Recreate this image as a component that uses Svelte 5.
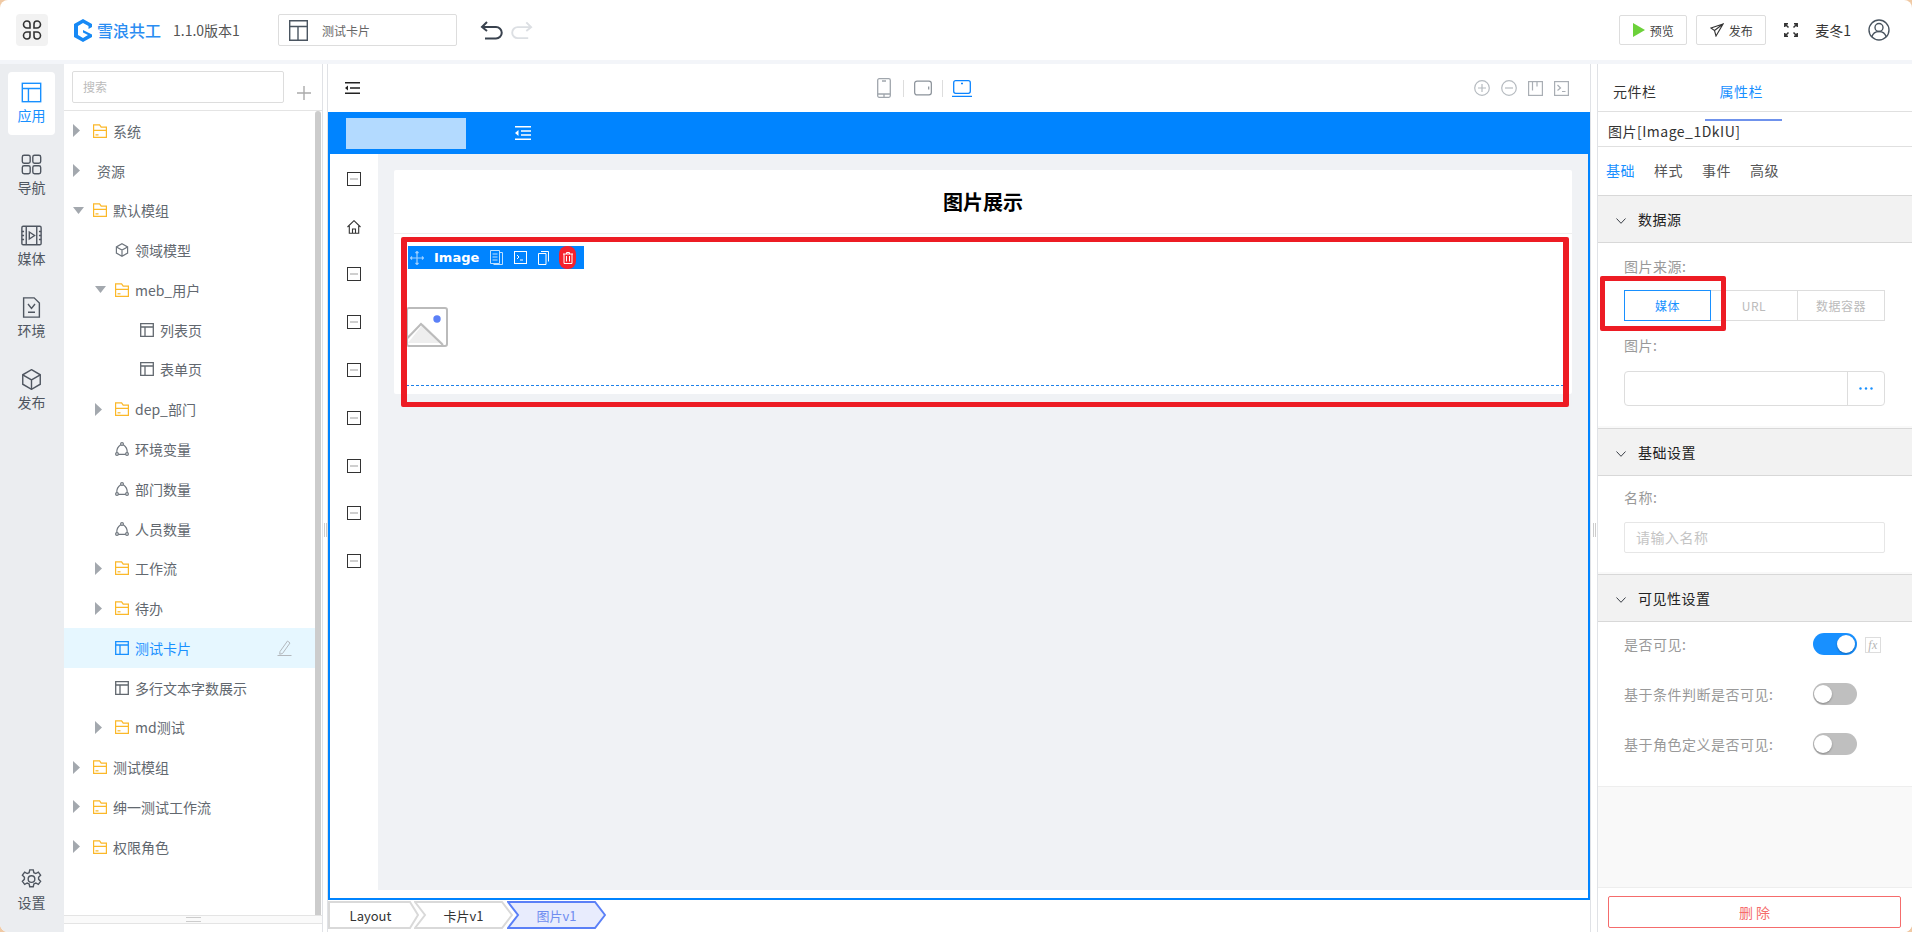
<script>
  const railItems = [
    { label: "应用", icon: "app", active: true },
    { label: "导航", icon: "nav" },
    { label: "媒体", icon: "media" },
    { label: "环境", icon: "env" },
    { label: "发布", icon: "cube" }
  ];

  const tree = [
    { level: 1, arrow: "right", icon: "folder", label: "系统" },
    { level: 1, arrow: "right", label: "资源" },
    { level: 1, arrow: "down", icon: "folder", label: "默认模组" },
    { level: 2, icon: "box", label: "领域模型" },
    { level: 2, arrow: "down", icon: "folder", label: "meb_用户" },
    { level: 3, icon: "page", label: "列表页" },
    { level: 3, icon: "page", label: "表单页" },
    { level: 2, arrow: "right", icon: "folder", label: "dep_部门" },
    { level: 2, icon: "bell", label: "环境变量" },
    { level: 2, icon: "bell", label: "部门数量" },
    { level: 2, icon: "bell", label: "人员数量" },
    { level: 2, arrow: "right", icon: "folder", label: "工作流" },
    { level: 2, arrow: "right", icon: "folder", label: "待办" },
    { level: 2, icon: "page", label: "测试卡片", active: true },
    { level: 2, icon: "page", label: "多行文本字数展示" },
    { level: 2, arrow: "right", icon: "folder", label: "md测试" },
    { level: 1, arrow: "right", icon: "folder", label: "测试模组" },
    { level: 1, arrow: "right", icon: "folder", label: "绅一测试工作流" },
    { level: 1, arrow: "right", icon: "folder", label: "权限角色" }
  ];

  const sideIcons = ["box", "home", "box", "box", "box", "box", "box", "box", "box"];
  const tabs = ["基础", "样式", "事件", "高级"];
  const crumbs = [
    { label: "Layout", first: true },
    { label: "卡片v1" },
    { label: "图片v1", active: true }
  ];
  const switches = [
    { label: "是否可见:", on: true },
    { label: "基于条件判断是否可见:", on: false },
    { label: "基于角色定义是否可见:", on: false }
  ];
</script>

{#snippet railIcon(name)}
  <svg width="21" height="21" viewBox="0 0 24 24" fill="none" stroke="currentColor" stroke-width="1.6">
    {#if name === "app"}
      <rect x="1.500" y="1.500" width="21" height="21" />
      <path d="M1.500 7.500h21M8.500 7.500v15" />
    {:else if name === "nav"}
      <rect x="1.500" y="1.500" width="9" height="9" rx="2" />
      <rect x="13.500" y="1.500" width="9" height="9" rx="2" />
      <rect x="1.500" y="13.500" width="9" height="9" rx="2" />
      <rect x="13.500" y="13.500" width="9" height="9" rx="2" />
    {:else if name === "media"}
      <rect x="1" y="1.500" width="22" height="21" rx="1.500" />
      <path d="M6 1.500v21M18 1.500v21M1 7.500h2.500M1 12h2.500M1 16.500h2.500M20.500 7.500H23M20.500 12H23M20.500 16.500H23" />
      <path d="M9.500 8l6 4-6 4z" />
    {:else if name === "env"}
      <path d="M3 1h12l6 6v16H3z" />
      <path d="M8 8l4 5 4-5M8 17.500h8" />
    {:else if name === "cube"}
      <path d="M12 .8l10 5.800v10.800l-10 5.800-10-5.800V6.600z" />
      <path d="M2 6.600l10 5.800 10-5.800M12 12.400v10.800" />
    {:else if name === "gear"}
      <path d="M10 1h4l.7 3.200 2.200 1 2.900-1.600 2.600 3.400-2.300 2.400v2.400l2.300 2.400-2.600 3.400-2.900-1.600-2.200 1-.7 3.200h-4l-.7-3.200-2.200-1-2.900 1.600-2.600-3.400 2.300-2.400v-2.400L1.600 7l2.600-3.400 2.900 1.600 2.200-1z" />
      <circle cx="12" cy="11.500" r="3.800" />
    {/if}
  </svg>
{/snippet}

{#snippet treeIcon(name)}
  <svg class="tree-icon" width="14" height="14" viewBox="0 0 14 14" fill="none" stroke-width="1.200">
    {#if name === "folder"}
      <path d="M.6 13.400V.8h6l1.600 2.400h5.200v10.200zM.6 6.400h12.800" stroke="#fbb829" />
      <path d="M2.500 10.800h3" stroke="#fbb829" />
    {:else if name === "box"}
      <path d="M7 .8l5.600 3.100v6.200L7 13.200l-5.600-3.100V3.900zM1.400 3.900L7 7l5.600-3.100M7 7v6.200" stroke="#6f767e" />
    {:else if name === "page"}
      <path d="M.7.7h12.600v12.600H.7zM.7 4h12.600M5 4v9.300" stroke="currentColor" stroke-width="1.300" />
    {:else if name === "bell"}
      <circle cx="7" cy="2" r="1.400" stroke="#6f767e" />
      <circle cx="2" cy="12" r="1.400" stroke="#6f767e" />
      <circle cx="12" cy="12" r="1.400" stroke="#6f767e" />
      <path d="M5.700 2.700C3 4.500 1.600 7.500 1.800 10.600M8.300 2.700c2.700 1.800 4.100 4.800 3.900 7.900M3.400 12.300h7.200" stroke="#6f767e" />
    {/if}
  </svg>
{/snippet}

{#snippet chevron()}
  <svg class="chev" width="10" height="6" viewBox="0 0 10 6" fill="none" stroke="#3a3f47" stroke-width="1"><path d="M.5.5L5 5.300 9.500.5" /></svg>
{/snippet}

<div class="page">
  <header class="top">
    <div class="menu-btn">
      <svg width="20" height="22" viewBox="0 0 20 22" fill="none" stroke="#333" stroke-width="1.600">
        <path d="M5 2a3 3 0 0 1 3 3v4H5a3.200 3.200 0 0 1 0-7zM15 2a3 3 0 0 0-3 3v4h3a3.200 3.200 0 0 0 0-7zM5 20a3 3 0 0 0 3-3v-4H5a3.200 3.200 0 0 0 0 7zM15 20a3 3 0 0 1-3-3v-4h3a3.200 3.200 0 0 1 0 7z" />
      </svg>
    </div>
    <svg class="logo" width="18" height="23" viewBox="0 0 18 23">
      <path d="M9 0l9 5v3l-3.500 2V7L9 4 4 7v9l5 3 5-3-5-2.500V11l9 4.500V18l-9 5-9-5V5z" fill="#1789f5" />
    </svg>
    <span class="brand">雪浪共工</span>
    <span class="version">1.1.0版本1</span>
    <div class="doc-select">
      <svg width="19" height="21" viewBox="0 0 19 21" fill="none" stroke="#4a5560" stroke-width="1.400"><path d="M.7.7h17.600v19.600H.7zM.7 6.500h17.600M9 6.500v13.800" /></svg>
      <span>测试卡片</span>
    </div>
    <svg class="undo" width="23" height="19" viewBox="0 0 23 19" fill="none" stroke="#39424e" stroke-width="2"><path d="M7 1L2 6l5 4M2 6h14a5.500 5.500 0 0 1 0 11.500H5" /></svg>
    <svg class="redo" width="22" height="19" viewBox="0 0 23 19" fill="none" stroke="#dcdfe3" stroke-width="2"><path d="M16 1l5 5-5 4M21 6H7a5.500 5.500 0 0 0 0 11.500h11" /></svg>
    <div class="top-right">
      <button class="top-btn">
        <svg width="12" height="14" viewBox="0 0 12 14"><path d="M0 0l12 7-12 7z" fill="#6cd13a" /></svg>预览
      </button>
      <button class="top-btn publish">
        <svg width="14" height="14" viewBox="0 0 14 14" fill="none" stroke="#333" stroke-width="1.100"><path d="M13 1L1 5l3.500 2.500L6 13zM4.500 7.500L13 1" /></svg>发布
      </button>
      <svg class="full" width="14" height="14" viewBox="0 0 14 14" fill="none" stroke="#333" stroke-width="1.500"><path d="M.8 4V.8H4M1 1l3.500 3.500M13.200 4V.8H10M13 1L9.500 4.500M.8 10v3.200H4M1 13l3.500-3.500M13.200 10v3.200H10M13 13L9.500 9.500" /></svg>
      <span class="user">麦冬1</span>
      <svg width="22" height="22" viewBox="0 0 22 22" fill="none" stroke="#4a5560" stroke-width="1.400"><circle cx="11" cy="11" r="10" /><circle cx="11" cy="8.500" r="4" /><path d="M3.800 18c1-3.500 4-5.500 7.200-5.500s6.200 2 7.200 5.500" /></svg>
    </div>
  </header>

  <div class="body">
    <nav class="rail">
      <div class="rail-top">
        {#each railItems as item}
          <div class="rail-item" class:active={item.active}>
            {@render railIcon(item.icon)}
            <span>{item.label}</span>
          </div>
        {/each}
      </div>
      <div class="rail-item">
        {@render railIcon("gear")}
        <span>设置</span>
      </div>
    </nav>

    <aside class="tree-panel">
      <div class="search-row">
        <div class="search">搜索</div>
        <svg width="14" height="14" viewBox="0 0 14 14" stroke="#aaa" stroke-width="1.400"><path d="M7 0v14M0 7h14" /></svg>
      </div>
      <div class="tree-scroll">
        <div class="tree">
          {#each tree as row}
            <div class="row level-{row.level}" class:active={row.active}>
              <span class="arrow">
                {#if row.arrow === "right"}
                  <svg width="7" height="13" viewBox="0 0 7 13"><path d="M0 0l7 6.500L0 13z" fill="#a3a8ae" /></svg>
                {:else if row.arrow === "down"}
                  <svg width="11" height="7" viewBox="0 0 11 7"><path d="M0 0h11L5.500 7z" fill="#a3a8ae" /></svg>
                {/if}
              </span>
              {#if row.icon}
                {@render treeIcon(row.icon)}
              {:else}
                <span class="no-icon"></span>
              {/if}
              <span class="row-label">{row.label}</span>
              {#if row.active}
                <svg class="pen" width="15" height="16" viewBox="0 0 15 16" fill="none" stroke="#b3b8bd" stroke-width="1"><path d="M3 11.500L10.500 1l2.500 2-7.500 10.500-2.800.7zM.5 15.500h14" /></svg>
              {/if}
            </div>
          {/each}
        </div>
        <div class="scrollbar"></div>
      </div>
      <div class="tree-foot"><i></i></div>
      <div class="tree-foot-input"></div>
    </aside>

    <div class="splitter"><i></i></div>

    <main class="center">
      <div class="toolbar">
        <svg class="indent" width="15" height="12" viewBox="0 0 15 12" stroke="#222" stroke-width="1.400" fill="none"><path d="M0 .7h15M5 6h10M0 11.300h15" /><path d="M3 3.500L0 6l3 2.500z" fill="#222" stroke="none" /></svg>
        <div class="devices">
          <svg width="14" height="20" viewBox="0 0 14 20" fill="none" stroke="#a0a6ad" stroke-width="1.300"><rect x=".7" y=".7" width="12.600" height="18.600" rx="1.500" /><path d="M.7 16h12.600M7 16v3.300M5 3h4" /></svg>
          <i class="first"></i>
          <svg width="18" height="16" viewBox="0 0 19 16" fill="none" stroke="#8b929a" stroke-width="1.300"><rect x=".7" y=".7" width="17.600" height="14.600" rx="2.500" /><path d="M15.500 6.500v3" /></svg>
          <i></i>
          <svg class="laptop" width="20" height="17" viewBox="0 0 20 17" fill="none" stroke="#0a84ff" stroke-width="1.300"><rect x="1.700" y=".7" width="16.600" height="12.600" rx="2" /><path d="M0 16.300h20M9 3.500h2" /></svg>
        </div>
        <div class="tools">
          <svg width="16" height="16" viewBox="0 0 16 16" fill="none" stroke="#b6bbc0" stroke-width="1.200"><circle cx="8" cy="8" r="7.300" /><path d="M8 4v8M4 8h8" /></svg>
          <svg width="16" height="16" viewBox="0 0 16 16" fill="none" stroke="#b6bbc0" stroke-width="1.200"><circle cx="8" cy="8" r="7.300" /><path d="M4 8h8" /></svg>
          <svg width="15" height="15" viewBox="0 0 15 15" fill="none" stroke="#a9aeb4" stroke-width="1.200"><rect x=".6" y=".6" width="13.800" height="13.800" /><path d="M4.500.6v9M9 .6v5" /></svg>
          <svg width="15" height="15" viewBox="0 0 15 15" fill="none" stroke="#a9aeb4" stroke-width="1.200"><rect x=".6" y=".6" width="13.800" height="13.800" /><path d="M3.500 4l3 3-3 2.500M8 10.500h3.500" /></svg>
        </div>
      </div>

      <div class="frame">
        <div class="frame-bar">
          <div class="frame-logo"></div>
          <svg width="16" height="14" viewBox="0 0 16 14" stroke="#fff" stroke-width="1.400" fill="none"><path d="M0 .7h16M6 5h10M6 9h10M0 13.300h16" /><path d="M3.500 4L0 7l3.500 3z" fill="#fff" stroke="none" /></svg>
        </div>
        <div class="frame-body">
          <div class="side">
            {#each sideIcons as icon}
              <div class="side-item">
                {#if icon === "home"}
                  <svg width="14" height="14" viewBox="0 0 14 14" fill="none" stroke="#333" stroke-width="1.100"><path d="M.5 7L7 .7 13.500 7M2.300 6v7.300h9.400V6M5.500 13.300V9h3v4.300" /></svg>
                {:else}
                  <svg width="14" height="14" viewBox="0 0 14 14" fill="none"><rect x=".5" y=".5" width="13" height="13" stroke="#333" /><path d="M3 7h8" stroke="#bbb" stroke-width="1.400" /></svg>
                {/if}
              </div>
            {/each}
          </div>
          <div class="canvas">
            <div class="card">
              <div class="card-title">图片展示</div>
              <div class="card-body">
                <div class="image-comp">
                  <svg class="placeholder" width="42" height="40" viewBox="0 0 42 40">
                    <path d="M2 36L17 17l20 19z" fill="#eee" />
                    <rect x="1" y="1" width="40" height="38" rx="2" fill="none" stroke="#bbb" stroke-width="2" />
                    <path d="M1.500 31L15 17l22 21" fill="none" stroke="#bbb" stroke-width="2" />
                    <circle cx="31" cy="12" r="3.700" fill="#5b80f7" />
                  </svg>
                  <div class="comp-bar">
                    <svg width="14" height="14" viewBox="0 0 14 14" fill="none" stroke="#9fd0ff" stroke-width="1.200"><path d="M7 0v14M0 7h14M5.500 2L7 .5 8.500 2M5.500 12L7 13.500 8.500 12M2 5.500L.5 7 2 8.500M12 5.500L13.500 7 12 8.500" /></svg>
                    <b>Image</b>
                    <svg class="bar-i" width="13" height="15" viewBox="0 0 13 15" fill="none" stroke="#bfe0ff" stroke-width="1"><path d="M.5.500h9v13h-9zM9.500 2.500h3v12h-9M2.500 4h5M2.500 7h5M2.500 10h5" /></svg>
                    <svg class="bar-i" width="13" height="13" viewBox="0 0 13 13" fill="none" stroke="#fff" stroke-width="1"><rect x=".5" y=".5" width="12" height="12" /><path d="M3 4l2 2-2 2M6 9h3" /></svg>
                    <svg class="bar-i" width="11" height="14" viewBox="0 0 11 14" fill="none" stroke="#fff" stroke-width="1"><path d="M.5 2.500h7.500v11H.5zM3 .5h7.500v10" /></svg>
                    <span class="trash">
                      <svg width="10" height="12" viewBox="0 0 10 12" fill="none" stroke="#fff" stroke-width="1"><path d="M0 2h10M3.500 2V.5h3V2M1 2v9.500h8V2M3.500 4v5.500M6.500 4v5.500" /></svg>
                    </span>
                  </div>
                  <div class="mark mark-image"></div>
                </div>
              </div>
            </div>
          </div>
        </div>
      </div>

      <div class="crumbs">
        {#each crumbs as crumb}
          <div class="crumb" class:first={crumb.first} class:active={crumb.active}>
            {#if crumb.first}
              <svg width="91" height="28" viewBox="0 0 91 28"><path d="M1 1h81l8 13-8 13H1z" /></svg>
            {:else}
              <svg width="99" height="28" viewBox="0 0 99 28"><path d="M1 1h87l10 13-10 13H1l10-13z" /></svg>
            {/if}
            <span>{crumb.label}</span>
          </div>
        {/each}
      </div>
    </main>

    <div class="splitter right"><i></i></div>

    <aside class="props">
      <div class="prop-tabs">
        <span>元件栏</span>
        <span class="current">属性栏</span>
      </div>
      <div class="comp-name">图片[Image_1DkIU]</div>
      <div class="sub-tabs">
        {#each tabs as tab, i}
          <span class:on={i === 0}>{tab}</span>
        {/each}
      </div>

      <section class="sec-head">{@render chevron()}数据源</section>
      <div class="sec-body source">
        <label>图片来源:</label>
        <div class="segments">
          <span class="seg selected">媒体</span>
          <span class="seg">URL</span>
          <span class="seg">数据容器</span>
        </div>
        <label class="second">图片:</label>
        <div class="picker">
          <span></span>
          <em><svg width="14" height="3" viewBox="0 0 14 3" fill="#1890ff"><circle cx="1.500" cy="1.500" r="1.200" /><circle cx="7" cy="1.500" r="1.200" /><circle cx="12.500" cy="1.500" r="1.200" /></svg></em>
        </div>
        <div class="mark mark-source"></div>
      </div>

      <section class="sec-head">{@render chevron()}基础设置</section>
      <div class="sec-body basic">
        <label>名称:</label>
        <div class="name-input">请输入名称</div>
      </div>

      <section class="sec-head">{@render chevron()}可见性设置</section>
      <div class="sec-body visible">
        {#each switches as item, i}
          <div class="switch-row">
            <label>{item.label}</label>
            <span class="switch" class:on={item.on}><i></i></span>
            {#if i === 0}
              <span class="fx">fx</span>
            {/if}
          </div>
        {/each}
      </div>

      <div class="filler"></div>
      <div class="prop-foot">
        <button class="delete">删 除</button>
      </div>
    </aside>
  </div>
</div>

<style>
  :global(body) {
    margin: 0;
    background: #f0c9a4;
    overflow: hidden;
  }

  .page {
    width: 1912px;
    height: 932px;
    background: #fff;
    border-radius: 8px;
    overflow: hidden;
    display: flex;
    flex-direction: column;
    font-family: "Noto Sans CJK SC", "Noto Sans", sans-serif;
    font-size: 14px;
    color: #333;
  }

  svg {
    flex: none;
    display: block;
  }

  .top {
    height: 60px;
    flex: none;
    display: flex;
    align-items: center;
    padding-left: 16px;
    border-bottom: 4px solid #f3f5f9;
    box-sizing: content-box;
  }

  .menu-btn {
    width: 32px;
    height: 32px;
    background: #f2f2f2;
    border-radius: 4px;
    display: flex;
    align-items: center;
    justify-content: center;
  }

  .logo {
    margin-left: 26px;
  }

  .brand {
    margin-left: 5px;
    font-size: 16px;
    font-weight: 500;
    color: #2a8df2;
  }

  .version {
    margin-left: 12px;
    color: #555;
  }

  .doc-select {
    margin-left: 38px;
    width: 179px;
    height: 32px;
    box-sizing: border-box;
    border: 1px solid #ddd;
    border-radius: 2px;
    display: flex;
    align-items: center;
    gap: 14px;
    padding-left: 10px;
    font-size: 12px;
    color: #666;
  }

  .undo {
    margin-left: 23px;
  }

  .redo {
    margin-left: 8px;
  }

  .top-right {
    margin-left: auto;
    display: flex;
    align-items: center;
    padding-right: 22px;
  }

  .top-btn {
    width: 68px;
    height: 30px;
    box-sizing: border-box;
    border: 1px solid #ddd;
    border-radius: 2px;
    background: #fff;
    display: flex;
    align-items: center;
    justify-content: center;
    gap: 5px;
    font: inherit;
    font-size: 12px;
    color: #444;
    padding: 0;
  }

  .top-btn.publish {
    width: 70px;
    margin-left: 9px;
  }

  .full {
    margin-left: 18px;
  }

  .user {
    margin: 0 17px;
    font-size: 14px;
    line-height: 20px;
  }

  .body {
    flex: 1;
    min-height: 0;
    display: flex;
  }

  .rail {
    width: 64px;
    flex: none;
    background: #ebedf0;
    display: flex;
    flex-direction: column;
    justify-content: space-between;
    padding: 8px 0 10px;
    box-sizing: border-box;
  }

  .rail-top {
    display: flex;
    flex-direction: column;
    gap: 8.700px;
  }

  .rail-item {
    width: 47px;
    height: 63px;
    margin-left: 8px;
    padding-top: 10px;
    box-sizing: border-box;
    border-radius: 4px;
    display: flex;
    flex-direction: column;
    align-items: center;
    gap: 2px;
    color: #4f5660;
  }

  .rail-item.active {
    background: #fff;
    color: #1890ff;
  }

  .tree-panel {
    width: 258px;
    flex: none;
    display: flex;
    flex-direction: column;
  }

  .search-row {
    height: 47px;
    flex: none;
    box-sizing: border-box;
    padding: 7px 0 0 8px;
    display: flex;
    gap: 13px;
    border-bottom: 1px solid #e4e4e4;
  }

  .search-row svg {
    margin-top: 15px;
  }

  .search {
    width: 212px;
    height: 32px;
    box-sizing: border-box;
    border: 1px solid #ddd;
    border-radius: 2px;
    padding-left: 10px;
    line-height: 30px;
    font-size: 12px;
    color: #bbb;
  }

  .tree-scroll {
    flex: 1;
    min-height: 0;
    display: flex;
  }

  .tree {
    flex: 1;
    color: #62686f;
  }

  .scrollbar {
    width: 6px;
    background: #ccc;
    border-radius: 3px 3px 0 0;
    margin-right: 1px;
  }

  .row {
    height: 39.780px;
    display: flex;
    align-items: center;
    position: relative;
  }

  .level-1 {
    padding-left: 8px;
  }

  .level-2 {
    padding-left: 30px;
  }

  .level-3 {
    padding-left: 55px;
  }

  .row.active {
    background: #e6f7ff;
    color: #1890ff;
  }

  .arrow {
    width: 21px;
    flex: none;
    padding-left: 1px;
    box-sizing: border-box;
  }

  .tree-icon {
    margin-right: 6px;
  }

  .no-icon {
    width: 4px;
  }

  .pen {
    position: absolute;
    left: 213px;
    top: 12px;
  }

  .tree-foot {
    height: 7px;
    flex: none;
    border-top: 1px solid #e4e4e4;
    border-bottom: 1px solid #e4e4e4;
    background: #fafafa;
    display: flex;
    align-items: center;
    justify-content: center;
  }

  .tree-foot i {
    width: 15px;
    height: 3px;
    border-top: 1px solid #ccc;
    border-bottom: 1px solid #ccc;
  }

  .tree-foot-input {
    height: 8px;
    flex: none;
  }

  .splitter {
    width: 6px;
    flex: none;
    border-left: 1px solid #e0e2e6;
    border-right: 1px solid #e0e2e6;
    box-sizing: border-box;
    display: flex;
    align-items: flex-start;
    justify-content: center;
  }

  .splitter.right {
    width: 8px;
  }

  .splitter i {
    margin-top: 459px;
    width: 1px;
    height: 14px;
    border-left: 1px solid #ccc;
    border-right: 1px solid #ccc;
  }

  .center {
    width: 1262px;
    flex: none;
    display: flex;
    flex-direction: column;
  }

  .toolbar {
    height: 48px;
    flex: none;
    position: relative;
    display: flex;
    align-items: center;
  }

  .indent {
    margin-left: 17px;
  }

  .devices {
    margin-left: 517px;
    display: flex;
    align-items: center;
    gap: 10px;
  }

  .devices i {
    width: 1px;
    height: 17px;
    background: #ddd;
  }

  .devices i.first {
    margin-left: 2px;
  }

  .laptop {
    margin-left: -1px;
  }

  .tools {
    margin-left: auto;
    padding-right: 21px;
    display: flex;
    align-items: center;
    gap: 11px;
  }

  .frame {
    height: 788px;
    flex: none;
    box-sizing: border-box;
    border: 2px solid #0084ff;
    border-top: 0;
    display: flex;
    flex-direction: column;
  }

  .frame-bar {
    height: 42px;
    flex: none;
    background: #0084ff;
    margin: 0 -2px;
    display: flex;
    align-items: center;
    gap: 49px;
    padding-left: 18px;
  }

  .frame-logo {
    width: 120px;
    height: 31px;
    background: #b3daff;
  }

  .frame-body {
    flex: 1;
    min-height: 0;
    display: flex;
  }

  .side {
    width: 48px;
    flex: none;
    padding-top: 1px;
  }

  .side-item {
    height: 47.800px;
    display: flex;
    align-items: center;
    justify-content: center;
    padding-right: 1px;
  }

  .canvas {
    flex: 1;
    background: #f0f2f5;
    margin-bottom: 8px;
    padding: 16px 16px 0;
  }

  .card {
    height: 224px;
    background: #fff;
    border-radius: 2px;
    display: flex;
    flex-direction: column;
  }

  .card-title {
    height: 63px;
    flex: none;
    border-bottom: 1px solid #eee;
    display: flex;
    align-items: center;
    justify-content: center;
    font-size: 20px;
    font-weight: 700;
    color: #000;
  }

  .card-body {
    flex: 1;
    padding: 7px 8px 8px 12px;
    display: flex;
  }

  .image-comp {
    flex: 1;
    position: relative;
    border: 1px dashed #1e80e8;
    padding-top: 65px;
  }

  .placeholder {
    margin-left: -1px;
  }

  .comp-bar {
    position: absolute;
    left: 1px;
    top: 4px;
    width: 176px;
    height: 23px;
    box-sizing: border-box;
    background: #0084ff;
    color: #fff;
    display: flex;
    align-items: center;
    padding-left: 2px;
  }

  .comp-bar b {
    margin: 0 11px 0 10px;
    font-family: "DejaVu Sans", sans-serif;
    font-size: 13px;
  }

  .bar-i {
    margin-right: 11px;
  }

  .trash {
    width: 17px;
    height: 23px;
    margin-left: -1px;
    border-radius: 8px;
    background: #f5222d;
    display: flex;
    align-items: center;
    justify-content: center;
  }

  .mark {
    position: absolute;
    box-sizing: border-box;
    border: 5px solid #ed1c24;
    border-radius: 2px;
    pointer-events: none;
  }

  .mark-image {
    left: -6px;
    top: -5px;
    width: 1168px;
    height: 170px;
    border-left-width: 6px;
    border-right-width: 6px;
  }

  .props {
    flex: 1;
    min-width: 0;
    background: #f9f9f9;
    display: flex;
    flex-direction: column;
    letter-spacing: 0.5px;
  }

  .prop-tabs {
    height: 48px;
    flex: none;
    background: #fff;
    box-sizing: border-box;
    border-bottom: 1px solid #e0e0e0;
    display: flex;
    gap: 63px;
    padding: 17px 0 0 15px;
  }

  .prop-tabs span {
    line-height: 20px;
  }

  .prop-tabs .current {
    color: #1890ff;
    position: relative;
  }

  .prop-tabs .current::after {
    content: "";
    position: absolute;
    left: -15px;
    right: -19px;
    bottom: -10px;
    height: 2px;
    background: #6f92ec;
  }

  .comp-name {
    height: 35px;
    flex: none;
    background: #fff;
    box-sizing: border-box;
    border-bottom: 1px solid #e0e0e0;
    padding: 2px 0 0 10px;
    line-height: 34px;
  }

  .sub-tabs {
    height: 48px;
    flex: none;
    background: #fff;
    display: flex;
    gap: 19px;
    padding-left: 8px;
    align-items: center;
    padding-bottom: 3px;
    box-sizing: border-box;
    color: #555;
  }

  .sub-tabs .on {
    color: #1890ff;
  }

  .sec-head {
    height: 48px;
    flex: none;
    box-sizing: border-box;
    background: #f2f2f2;
    border-top: 1px solid #d8d8d8;
    border-bottom: 1px solid #d8d8d8;
    display: flex;
    align-items: center;
    padding-left: 18px;
    color: #222;
  }

  .chev {
    margin: 3px 12px 0 0;
  }

  .sec-body {
    flex: none;
    background: #fff;
    box-sizing: border-box;
    padding: 0 26px;
    position: relative;
    margin-bottom: 2px;
    color: #999;
  }

  .sec-body label {
    display: block;
    line-height: 20px;
  }

  .source {
    height: 183px;
    padding-top: 13px;
  }

  .segments {
    margin-top: 14px;
    display: grid;
    grid-template-columns: repeat(3, 87px);
    width: 261px;
    height: 31px;
    box-sizing: border-box;
  }

  .seg {
    border: 1px solid #ddd;
    border-left: 0;
    display: flex;
    align-items: center;
    justify-content: center;
    font-size: 12px;
    color: #bbb;
  }

  .seg.selected {
    border: 1px solid #1890ff;
    color: #1890ff;
  }

  .second {
    margin-top: 14px;
  }

  .picker {
    margin-top: 16px;
    width: 261px;
    height: 35px;
    box-sizing: border-box;
    border: 1px solid #ddd;
    border-radius: 4px;
    display: flex;
  }

  .picker span {
    flex: 1;
    border-right: 1px solid #ddd;
  }

  .picker em {
    width: 36px;
    display: flex;
    align-items: center;
    justify-content: center;
  }

  .mark-source {
    left: 2px;
    top: 33px;
    width: 126px;
    height: 55px;
  }

  .basic {
    height: 96px;
    padding-top: 11px;
  }

  .name-input {
    margin-top: 15px;
    width: 261px;
    height: 31px;
    box-sizing: border-box;
    border: 1px solid #e6e6e6;
    border-radius: 2px;
    padding-left: 11px;
    line-height: 29px;
    color: #c4c4c4;
  }

  .visible {
    height: 164px;
    padding-top: 12px;
    margin-bottom: 0;
    box-shadow: 0 1px 0 #eee;
  }

  .switch-row {
    height: 50px;
    display: flex;
    align-items: flex-start;
    position: relative;
  }

  .switch-row label {
    width: 189px;
    flex: none;
  }

  .switch {
    width: 44px;
    height: 22px;
    margin-top: -1px;
    border-radius: 11px;
    background: #bfbfbf;
    position: relative;
    flex: none;
  }

  .switch i {
    position: absolute;
    left: 1px;
    top: 2px;
    width: 18px;
    height: 18px;
    border-radius: 50%;
    background: #fff;
    box-shadow: 0 1px 2px rgba(0, 0, 0, 0.3);
  }

  .switch.on {
    background: #1890ff;
  }

  .switch.on i {
    left: 24px;
  }

  .fx {
    width: 16px;
    height: 16px;
    margin: 3px 0 0 8px;
    box-sizing: border-box;
    border: 1px solid #ddd;
    font-family: "Liberation Serif", serif;
    font-style: italic;
    font-size: 12px;
    line-height: 14px;
    text-align: center;
    color: #b5b5b5;
  }

  .filler {
    flex: 1;
  }

  .prop-foot {
    height: 45px;
    flex: none;
    background: #fff;
    border-top: 1px solid #eee;
    box-sizing: border-box;
    padding: 8px 0 0 10px;
  }

  .delete {
    width: 293px;
    height: 32px;
    border: 1px solid #f56c6c;
    border-radius: 2px;
    background: #fff;
    color: #f56c6c;
    font: inherit;
    padding: 0;
  }

  .crumbs {
    margin-top: 1px;
    height: 28px;
    flex: none;
    display: flex;
  }

  .crumb {
    width: 99px;
    height: 28px;
    margin-right: -6px;
    position: relative;
    display: flex;
    align-items: center;
    justify-content: center;
    font-size: 13px;
    color: #333;
  }

  .crumb.first {
    width: 91px;
    margin-right: -5px;
  }

  .crumb svg {
    position: absolute;
    left: 0;
    top: 0;
    fill: #fff;
    stroke: #d9d9d9;
    stroke-width: 2;
  }

  .crumb span {
    position: relative;
  }

  .crumb.first span {
    padding-right: 6px;
  }

  .crumb.active {
    color: #6f8df0;
  }

  .crumb.active svg {
    fill: #e8ecfd;
    stroke: #5b80f7;
  }
</style>
